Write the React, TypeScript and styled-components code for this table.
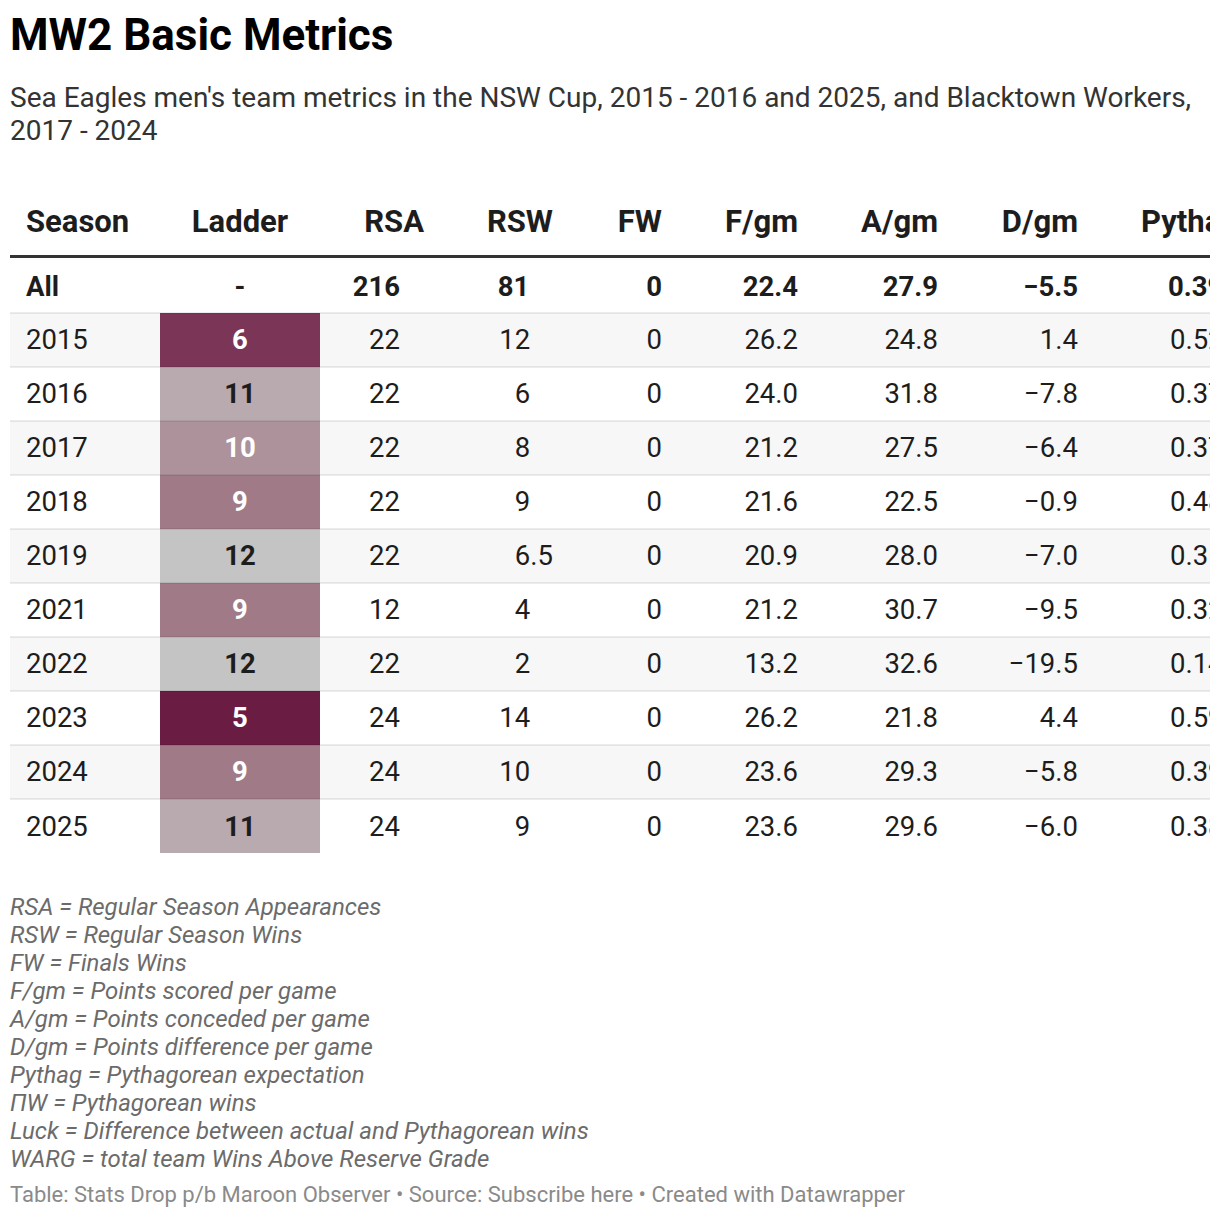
import styled, { createGlobalStyle } from "styled-components";

const GlobalStyle = createGlobalStyle`
  html, body {
    margin: 0;
    padding: 0;
    background: #ffffff;
  }
  body {
    font-family: Roboto, "Liberation Sans", Arial, sans-serif;
    color: #1d1d1d;
  }
`;

type Row = {
  season: string;
  ladder: string;
  rsa: string;
  rsw: string;
  fw: string;
  fgm: string;
  agm: string;
  dgm: string;
  pythag: string;
  pw: string;
  luck: string;
  warg: string;
};

const total: Row = {
  season: "All",
  ladder: "-",
  rsa: "216",
  rsw: "81",
  fw: "0",
  fgm: "22.4",
  agm: "27.9",
  dgm: "−5.5",
  pythag: "0.392",
  pw: "84.6",
  luck: "−3.6",
  warg: "−",
};

const rows: Row[] = [
  { season: "2015", ladder: "6", rsa: "22", rsw: "12", fw: "0", fgm: "26.2", agm: "24.8", dgm: "1.4", pythag: "0.527", pw: "11.6", luck: "0.4", warg: "−" },
  { season: "2016", ladder: "11", rsa: "22", rsw: "6", fw: "0", fgm: "24.0", agm: "31.8", dgm: "−7.8", pythag: "0.372", pw: "8.1", luck: "−2.1", warg: "−" },
  { season: "2017", ladder: "10", rsa: "22", rsw: "8", fw: "0", fgm: "21.2", agm: "27.5", dgm: "−6.4", pythag: "0.373", pw: "8.2", luck: "−0.2", warg: "−" },
  { season: "2018", ladder: "9", rsa: "22", rsw: "9", fw: "0", fgm: "21.6", agm: "22.5", dgm: "−0.9", pythag: "0.480", pw: "10.6", luck: "−1.6", warg: "−" },
  { season: "2019", ladder: "12", rsa: "22", rsw: "6.5", fw: "0", fgm: "20.9", agm: "28.0", dgm: "−7.0", pythag: "0.358", pw: "7.9", luck: "−1.4", warg: "−" },
  { season: "2021", ladder: "9", rsa: "12", rsw: "4", fw: "0", fgm: "21.2", agm: "30.7", dgm: "−9.5", pythag: "0.323", pw: "3.9", luck: "0.1", warg: "−" },
  { season: "2022", ladder: "12", rsa: "22", rsw: "2", fw: "0", fgm: "13.2", agm: "32.6", dgm: "−19.5", pythag: "0.141", pw: "3.3", luck: "−1.3", warg: "−" },
  { season: "2023", ladder: "5", rsa: "24", rsw: "14", fw: "0", fgm: "26.2", agm: "21.8", dgm: "4.4", pythag: "0.591", pw: "14.0", luck: "0.0", warg: "−" },
  { season: "2024", ladder: "9", rsa: "24", rsw: "10", fw: "0", fgm: "23.6", agm: "29.3", dgm: "−5.8", pythag: "0.393", pw: "9.4", luck: "0.6", warg: "−" },
  { season: "2025", ladder: "11", rsa: "24", rsw: "9", fw: "0", fgm: "23.6", agm: "29.6", dgm: "−6.0", pythag: "0.389", pw: "9.2", luck: "−0.2", warg: "−" },
];

const ladderColors: Record<string, { bg: string; fg: string }> = {
  "5": { bg: "#6b1c42", fg: "#ffffff" },
  "6": { bg: "#7b3556", fg: "#ffffff" },
  "9": { bg: "#a07a86", fg: "#ffffff" },
  "10": { bg: "#ad929b", fg: "#ffffff" },
  "11": { bg: "#b8aaaf", fg: "#1d1d1d" },
  "12": { bg: "#c4c4c4", fg: "#1d1d1d" },
};

const notes = [
  "RSA = Regular Season Appearances",
  "RSW = Regular Season Wins",
  "FW = Finals Wins",
  "F/gm = Points scored per game",
  "A/gm = Points conceded per game",
  "D/gm = Points difference per game",
  "Pythag = Pythagorean expectation",
  "ΠW = Pythagorean wins",
  "Luck = Difference between actual and Pythagorean wins",
  "WARG = total team Wins Above Reserve Grade",
];

const columns = [
  { key: "season", label: "Season", width: 150 },
  { key: "ladder", label: "Ladder", width: 160 },
  { key: "rsa", label: "RSA", width: 120 },
  { key: "rsw", label: "RSW", width: 129 },
  { key: "fw", label: "FW", width: 109 },
  { key: "fgm", label: "F/gm", width: 136 },
  { key: "agm", label: "A/gm", width: 140 },
  { key: "dgm", label: "D/gm", width: 140 },
  { key: "pythag", label: "Pythag", width: 161 },
  { key: "pw", label: "ΠW", width: 110 },
  { key: "luck", label: "Luck", width: 110 },
  { key: "warg", label: "WARG", width: 120 },
];

const tableWidth = columns.reduce((sum, c) => sum + c.width, 0);

const renderCells = (row: Row, bold: boolean) => {
  const ladder = ladderColors[row.ladder];
  return (
    <>
      <SeasonCell $bold={bold}>{row.season}</SeasonCell>
      <LadderCell
        $bold
        $bg={ladder ? ladder.bg : "transparent"}
        $fg={ladder ? ladder.fg : "#1d1d1d"}
      >
        {row.ladder}
      </LadderCell>
      <NumCell $bold={bold} $pad={40}>{row.rsa}</NumCell>
      <NumCell $bold={bold} $pad={16}>
        {row.rsw}
        {!row.rsw.includes(".") && <Ghost>.5</Ghost>}
      </NumCell>
      <NumCell $bold={bold} $pad={16}>{row.fw}</NumCell>
      <NumCell $bold={bold} $pad={16}>{row.fgm}</NumCell>
      <NumCell $bold={bold} $pad={16}>{row.agm}</NumCell>
      <NumCell $bold={bold} $pad={16}>{row.dgm}</NumCell>
      <NumCell $bold={bold} $pad={16}>{row.pythag}</NumCell>
      <NumCell $bold={bold} $pad={16}>{row.pw}</NumCell>
      <NumCell $bold={bold} $pad={16}>{row.luck}</NumCell>
      <NumCell $bold={bold} $pad={16}>{row.warg}</NumCell>
    </>
  );
};

const App = () => {
  return (
    <Page>
      <GlobalStyle />
      <Title>MW2 Basic Metrics</Title>
      <Subtitle>
        Sea Eagles men's team metrics in the NSW Cup, 2015 - 2016 and 2025, and
        Blacktown Workers, 2017 - 2024
      </Subtitle>

      <TableWrap>
        <Table style={{ width: tableWidth }}>
          <colgroup>
            {columns.map((c) => (
              <col key={c.key} style={{ width: c.width }} />
            ))}
          </colgroup>
          <thead>
            <tr>
              {columns.map((c, i) => (
                <HeadCell key={c.key} $align={i === 0 ? "left" : i === 1 ? "center" : "right"}>
                  {c.label}
                </HeadCell>
              ))}
            </tr>
          </thead>
          <tbody>
            <TotalRow>{renderCells(total, true)}</TotalRow>
            {rows.map((r, i) => (
              <DataRow key={r.season} $striped={i % 2 === 0}>
                {renderCells(r, false)}
              </DataRow>
            ))}
          </tbody>
        </Table>
      </TableWrap>

      <Notes>
        {notes.map((n) => (
          <Note key={n}>{n}</Note>
        ))}
      </Notes>

      <Footer>
        Table: Stats Drop p/b Maroon Observer • Source: Subscribe here • Created
        with Datawrapper
      </Footer>
    </Page>
  );
};

export default App;

const Page = styled.div`
  width: 1200px;
  padding: 9px 10px 0;
  font-family: Roboto, "Liberation Sans", Arial, sans-serif;
`;

const Title = styled.h1`
  margin: 0;
  font-size: 44px;
  line-height: 52px;
  font-weight: 700;
  color: #000000;
`;

const Subtitle = styled.p`
  margin: 20px 0 0;
  font-size: 28px;
  line-height: 33px;
  color: #333333;
`;

const TableWrap = styled.div`
  margin-top: 41px;
  width: 1200px;
  overflow: hidden;
`;

const Table = styled.table`
  table-layout: fixed;
  border-collapse: collapse;
  border-spacing: 0;
  font-size: 27.5px;
  color: #1d1d1d;
`;

const HeadCell = styled.th<{ $align: "left" | "center" | "right" }>`
  height: 67px;
  padding: 0 16px;
  text-align: ${(p) => p.$align};
  font-size: 31px;
  font-weight: 700;
  white-space: nowrap;
  border-bottom: 3px solid #333333;
  vertical-align: middle;
`;

const TotalRow = styled.tr`
  height: 56px;

  td {
    padding-top: 3px;
  }
`;

const DataRow = styled.tr<{ $striped: boolean }>`
  height: 54px;
  background: ${(p) => (p.$striped ? "#f7f7f7" : "#ffffff")};

  td {
    border-top: 2px solid rgba(0, 0, 0, 0.075);
  }
`;

const Cell = styled.td<{ $bold?: boolean }>`
  padding: 0 16px;
  white-space: nowrap;
  font-weight: ${(p) => (p.$bold ? 700 : 400)};
  vertical-align: middle;
`;

const SeasonCell = styled(Cell)`
  text-align: left;
`;

const LadderCell = styled(Cell)<{ $bg: string; $fg: string }>`
  text-align: center;
  background: ${(p) => p.$bg};
  color: ${(p) => p.$fg};
`;

const NumCell = styled(Cell)<{ $pad: number }>`
  text-align: right;
  padding-right: ${(p) => p.$pad}px;
`;

const Ghost = styled.span`
  visibility: hidden;
`;

const Notes = styled.div`
  margin-top: 40px;
  display: flex;
  flex-direction: column;
`;

const Note = styled.div`
  font-size: 24px;
  line-height: 28px;
  font-style: italic;
  color: #6b6b6b;
`;

const Footer = styled.div`
  margin-top: 8px;
  font-size: 22px;
  line-height: 28px;
  color: #8a8a8a;
`;
